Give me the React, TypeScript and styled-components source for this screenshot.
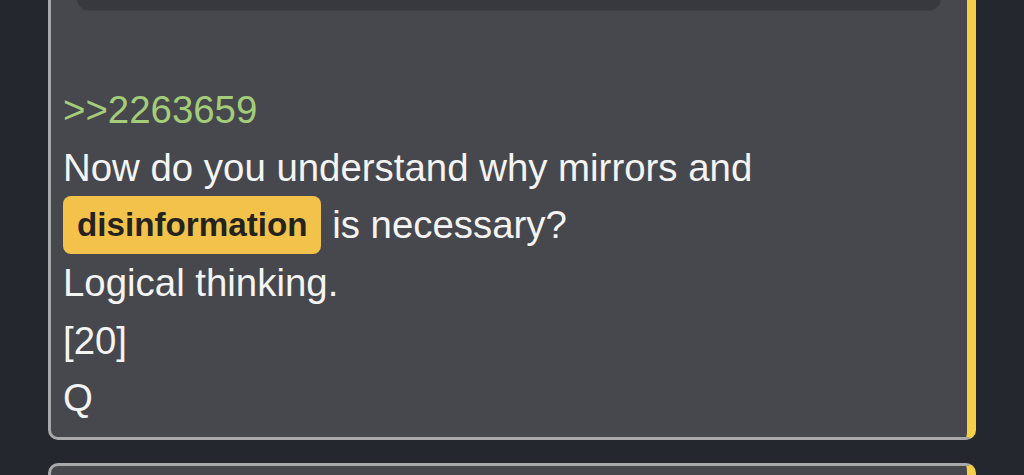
import React from "react";
import styled, { createGlobalStyle } from "styled-components";

const Global = createGlobalStyle`
  html, body { margin: 0; padding: 0; background: #25272e; overflow: hidden; }
  body { font-family: "Liberation Sans", Arial, Helvetica, sans-serif; }
`;

const Feed = styled.div`
  display: flex;
  flex-direction: column;
  gap: 23px;
  padding: 0 48px;
  margin-top: -150px;
`;

const Card = styled.article`
  background: #47484d;
  border: 3px solid #a9a9ab;
  border-right: 9px solid #f3cf48;
  border-radius: 10px;
  padding: 10px 12px 10px 12px;
  min-height: 60px;
`;

const Embed = styled.div`
  height: 147px;
  margin: 0 14px;
  background: #38393e;
  border-radius: 12px;
  box-shadow: 0 1px 1px #3f4045;
`;

const Body = styled.div`
  margin-top: 71px;
  color: #f4f4f4;
  font-size: 38.4px;
  line-height: 57.5px;
`;

const Line = styled.div<{ $green?: boolean }>`
  color: ${(p) => (p.$green ? "#a4cd79" : "#f4f4f4")};
`;

const Highlight = styled.span`
  display: inline-block;
  vertical-align: top;
  height: 58px;
  line-height: 58px;
  padding: 0 14px;
  background: #f3c24b;
  color: #25231f;
  font-weight: 700;
  font-size: 33.2px;
  border-radius: 8px;
`;

export default function App() {
  return (
    <>
      <Global />
      <Feed>
        <Card>
          <Embed />
          <Body>
            <Line $green>&gt;&gt;2263659</Line>
            <Line>
              Now do you understand why mirrors and <Highlight>disinformation</Highlight> is necessary?
            </Line>
            <Line>Logical thinking.</Line>
            <Line>[20]</Line>
            <Line>Q</Line>
          </Body>
        </Card>
        <Card />
      </Feed>
    </>
  );
}
